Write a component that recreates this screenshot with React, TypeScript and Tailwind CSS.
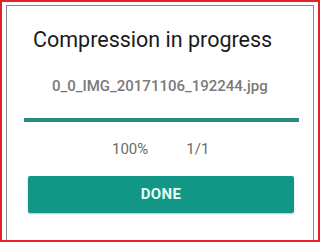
import React from 'react'

export default function App() {
  return (
    <div
      className="w-[320px] h-[242px] bg-white border-2 border-[#e0262b] overflow-hidden"
      style={{ fontFamily: 'Roboto, "Liberation Sans", sans-serif' }}
    >
      <div className="ml-[4px] mt-[3px] mr-[4px] h-[240px] border-l border-t border-r border-[#8a8a8a] bg-white">
        {/* Title */}
        <h1 className="pl-[26px] pt-[19px] text-[21.5px] leading-[30px] text-[#1b1b1b]">
          Compression in progress
        </h1>

        {/* File name */}
        <p className="mt-[22px] pl-[45px] text-[15px] leading-[18px] font-medium text-[#7a7a7a]">
          0_0_IMG_20171106_192244.jpg
        </p>

        {/* Progress bar */}
        <div className="mt-[23px] ml-[17px] mr-[14px] h-[4px] bg-[#2a8a7b]" />

        {/* Stats */}
        <div className="mt-[18px] flex text-[15px] leading-[18px] text-[#6b6b6b]">
          <span className="ml-[105px]">100%</span>
          <span className="ml-[38px]">1/1</span>
        </div>

        {/* Button */}
        <div className="mt-[18px] ml-[21px] mr-[19px]">
          <button className="w-full h-[37px] rounded-[2px] bg-[#129685] text-[#e6fbf7] text-[15px] font-bold tracking-wide shadow-[0_1px_2px_rgba(0,0,0,0.25)]">
            DONE
          </button>
        </div>
      </div>
    </div>
  )
}
